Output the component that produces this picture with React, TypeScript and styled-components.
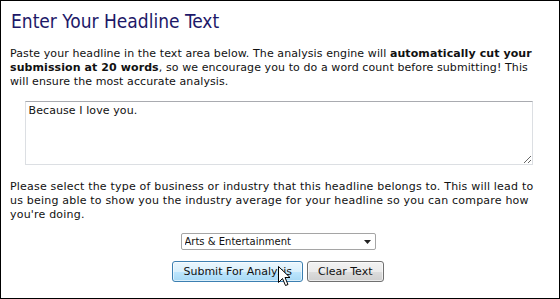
import React from "react";
import styled, { createGlobalStyle } from "styled-components";

const Global = createGlobalStyle`
  html, body { margin: 0; padding: 0; background: #fff; }
  body { font-family: "DejaVu Sans", Verdana, sans-serif; }
`;

const Frame = styled.div`
  position: relative;
  box-sizing: border-box;
  width: 560px;
  height: 299px;
  border: 1px solid #000;
  padding: 8px 9px 0 9px;
  display: flex;
  flex-direction: column;
  color: #111;
  overflow: hidden;
`;

const Title = styled.h1`
  margin: 0 0 0 1px;
  font-family: "DejaVu Sans Condensed", "DejaVu Sans", sans-serif;
  font-weight: normal;
  font-size: 19px;
  line-height: 24px;
  color: #1d1868;
`;

const Para = styled.p<{ $top: number; $width: number; $spacing: number }>`
  margin: ${(p) => p.$top}px 0 0 0;
  font-size: 11px;
  letter-spacing: ${(p) => p.$spacing}px;
  line-height: 14px;
  width: ${(p) => p.$width}px;
`;

const AreaRow = styled.div`
  display: flex;
  justify-content: center;
  margin-top: 12px;
  padding-right: 3px;
`;

const Area = styled.textarea`
  box-sizing: border-box;
  width: 508px;
  height: 64px;
  margin: 0;
  padding: 2px 3px;
  border: 1px solid #dcdfe3;
  border-top-color: #a9abb0;
  font-family: "DejaVu Sans", sans-serif;
  font-size: 11px;
  letter-spacing: 0.09px;
  line-height: 14px;
  color: #111;
  outline: none;
`;

const Center = styled.div<{ $top: number }>`
  display: flex;
  justify-content: center;
  gap: 4px;
  margin-top: ${(p) => p.$top}px;
  padding-right: 4px;
`;

const SelectWrap = styled.span`
  position: relative;
  display: inline-flex;
`;

const Select = styled.select`
  appearance: none;
  -webkit-appearance: none;
  box-sizing: border-box;
  width: 195px;
  height: 17px;
  margin: 0;
  padding: 0 0 0 3px;
  border: 1px solid #a5a5a5;
  border-radius: 2px;
  background: #fff;
  font-family: "DejaVu Sans", sans-serif;
  font-size: 10px;
  color: #111;
  outline: none;
`;

const Arrow = styled.svg`
  position: absolute;
  right: 5px;
  top: 7px;
  pointer-events: none;
`;

const Button = styled.button<{ $hot?: boolean }>`
  box-sizing: border-box;
  height: 21px;
  margin: 0;
  padding: 0 10px;
  border: 1px solid ${(p) => (p.$hot ? "#3c7fb1" : "#707070")};
  border-radius: 3px;
  background: ${(p) =>
    p.$hot
      ? "linear-gradient(#eaf6fd 0%, #d9f0fc 50%, #bee6fd 51%, #a7d9f5 100%)"
      : "linear-gradient(#f2f2f2 0%, #ebebeb 50%, #dddddd 51%, #cfcfcf 100%)"};
  box-shadow: inset 0 0 0 1px rgba(255, 255, 255, 0.6);
  font-family: "DejaVu Sans", sans-serif;
  font-size: 11px;
  color: #111;
`;

const Cursor = styled.svg`
  position: absolute;
  left: 277px;
  top: 265px;
  pointer-events: none;
`;

export default function App() {
  return (
    <>
      <Global />
      <Frame>
        <Title>Enter Your Headline Text</Title>
        <Para $top={14} $width={532} $spacing={0.09}>
          Paste your headline in the text area below. The analysis engine will{" "}
          <b>automatically cut your submission at 20 words</b>, so we encourage you to do a
          word count before submitting! This will ensure the most accurate analysis.
        </Para>
        <AreaRow>
          <Area defaultValue="Because I love you." />
        </AreaRow>
        <Para $top={15} $width={538} $spacing={0.2}>
          Please select the type of business or industry that this headline belongs to. This
          will lead to us being able to show you the industry average for your headline so you
          can compare how you're doing.
        </Para>
        <Center $top={11}>
          <SelectWrap>
            <Select defaultValue="arts">
              <option value="arts">Arts &amp; Entertainment</option>
            </Select>
            <Arrow width="7" height="4" viewBox="0 0 7 4">
              <path d="M0 0 H7 L3.5 4 Z" fill="#222" />
            </Arrow>
          </SelectWrap>
        </Center>
        <Center $top={11}>
          <Button $hot>Submit For Analysis</Button>
          <Button>Clear Text</Button>
        </Center>
        <Cursor width="13" height="21" viewBox="0 0 13 21">
          <path
            d="M0.5 0.5 L0.5 16.5 L4.5 12.5 L7.5 19.5 L10 18.5 L7 11.5 L12 11.5 Z"
            fill="#fff"
            stroke="#000"
            strokeWidth="1"
          />
        </Cursor>
      </Frame>
    </>
  );
}
